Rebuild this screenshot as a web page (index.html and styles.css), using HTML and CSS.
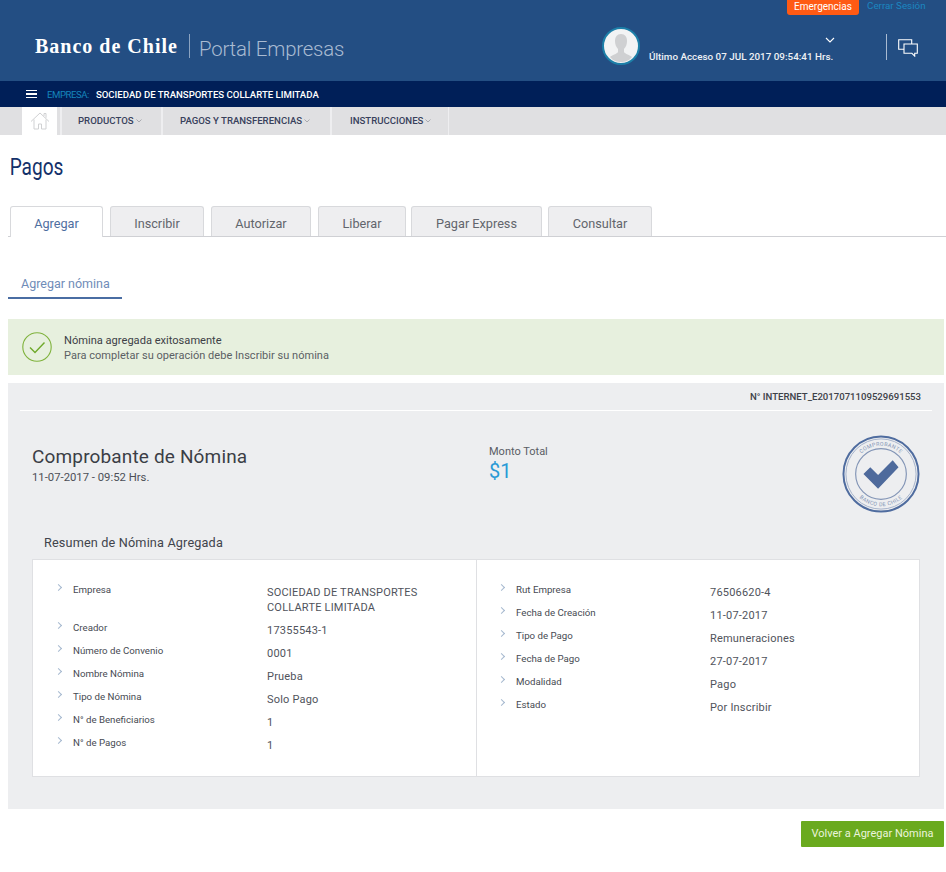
FILE: index.html
```html
<!DOCTYPE html>
<html lang="es">
<head>
<meta charset="utf-8">
<title>Pagos</title>
<link rel="stylesheet" href="styles.css">
</head>
<body>
<header class="header">
  <div class="top-links">
    <a class="emergency">Emergencias</a>
    <a class="logout">Cerrar Sesión</a>
  </div>
  <div class="header-main">
    <div class="logo">Banco de Chile</div>
    <div class="portal">Portal Empresas</div>
    <div class="user">
      <svg class="avatar" width="38" height="38" viewBox="0 0 38 38">
        <circle cx="19" cy="19" r="18" fill="#f2f3f4" stroke="#1c7fa8" stroke-width="2"/>
        <path d="M19 7c-4 0-6 3-6 7 0 3 1 6 3 8v3c-1 2-6 3-8 5 3 4 7 5 11 5s8-1 11-5c-2-2-7-3-8-5v-3c2-2 3-5 3-8 0-4-2-7-6-7z" fill="#cfd0d2"/>
      </svg>
      <div class="user-info">
        <svg class="user-chev" width="10" height="6" viewBox="0 0 10 6"><path d="M1 1l4 4 4-4" fill="none" stroke="#fff" stroke-width="1.1"/></svg>
        <div class="last-access">Último Acceso 07 JUL 2017 09:54:41 Hrs.</div>
      </div>
    </div>
    <div class="chat">
      <svg width="20" height="18" viewBox="0 0 20 18"><path d="M.7.7h13v9.6H4.5L.7 10.3z" fill="none" stroke="#fff" stroke-width="1.1"/><path d="M6 5h13.3v9.3h-2.600v2.800l-2.800-2.800H6z" fill="#234e83" stroke="#fff" stroke-width="1.1"/></svg>
    </div>
  </div>
</header>
<div class="company-bar">
  <span class="burger"><i></i><i></i><i></i></span>
  <span class="company-label">EMPRESA:</span>
  <span class="company-name">SOCIEDAD DE TRANSPORTES COLLARTE LIMITADA</span>
</div>
<nav class="nav">
  <a class="nav-home">
    <svg width="20" height="18" viewBox="0 0 20 18"><path d="M1 9.5L10 1l9 8.5M4 7.5V17h4.500v-5h3v5H16V7.500M14 4V1.500h2v4.300" fill="none" stroke="#d0d1d3" stroke-width="1"/></svg>
  </a>
  <a class="nav-item nav-products">PRODUCTOS<svg class="caret" width="6" height="4" viewBox="0 0 6 4"><path d="M.5.500L3 3 5.500.500" fill="none" stroke="#9a9ca3" stroke-width=".8"/></svg></a>
  <a class="nav-item nav-payments">PAGOS Y TRANSFERENCIAS<svg class="caret" width="6" height="4" viewBox="0 0 6 4"><path d="M.5.500L3 3 5.500.500" fill="none" stroke="#9a9ca3" stroke-width=".8"/></svg></a>
  <a class="nav-item nav-instr">INSTRUCCIONES<svg class="caret" width="6" height="4" viewBox="0 0 6 4"><path d="M.5.500L3 3 5.500.500" fill="none" stroke="#9a9ca3" stroke-width=".8"/></svg></a>
</nav>
<main class="page">
  <h1 class="page-title">Pagos</h1>
  <div class="tabs">
    <a class="tab tab-active t-add">Agregar</a>
    <a class="tab t-reg">Inscribir</a>
    <a class="tab t-auth">Autorizar</a>
    <a class="tab t-free">Liberar</a>
    <a class="tab t-exp">Pagar Express</a>
    <a class="tab t-find">Consultar</a>
  </div>
  <div class="subtab">Agregar nómina</div>
  <div class="alert">
    <svg width="30" height="30" viewBox="0 0 30 30"><circle cx="15" cy="15" r="14.200" fill="none" stroke="#7fb23c" stroke-width="1.100"/><path d="M8 15.500l5 5 9.500-10" fill="none" stroke="#6fa92b" stroke-width="1.400"/></svg>
    <div class="alert-text">
      <div class="alert-title">Nómina agregada exitosamente</div>
      <div class="alert-sub">Para completar su operación debe Inscribir su nómina</div>
    </div>
  </div>
  <section class="receipt">
    <div class="receipt-id">N° INTERNET_E2017071109529691553</div>
    <div class="receipt-head">
      <div class="receipt-title">
        <h2>Comprobante de Nómina</h2>
        <div class="receipt-date">11-07-2017 - 09:52 Hrs.</div>
      </div>
      <div class="receipt-total">
        <div class="total-label">Monto Total</div>
        <div class="total-value">$1</div>
      </div>
      <svg class="stamp" width="78" height="78" viewBox="0 0 80 80">
        <defs>
          <path id="arcTop" d="M11 40a29 29 0 0 1 58 0"/>
          <path id="arcBottom" d="M7 40a33 33 0 0 0 66 0"/>
        </defs>
        <circle cx="40" cy="40" r="38.500" fill="none" stroke="#4f6c9f" stroke-width="2"/>
        <circle cx="40" cy="40" r="36" fill="none" stroke="#a5b2ca" stroke-width="1"/>
        <circle cx="40" cy="40" r="26" fill="none" stroke="#8395b6" stroke-width="1.200"/>
        <text class="stamp-text"><textPath href="#arcTop" startOffset="50%" text-anchor="middle">COMPROBANTE</textPath></text>
        <text class="stamp-text"><textPath href="#arcBottom" startOffset="50%" text-anchor="middle">BANCO DE CHILE</textPath></text>
        <path d="M22 40l7-7 8 8 15-15 6 7-21 22z" fill="#4e6a9c"/>
      </svg>
    </div>
    <h3 class="summary-title">Resumen de Nómina Agregada</h3>
    <div class="summary">
      <div class="summary-col">
        <div class="row"><span class="chev"></span><span class="k">Empresa</span><span class="v">SOCIEDAD DE TRANSPORTES<br>COLLARTE LIMITADA</span></div>
        <div class="row"><span class="chev"></span><span class="k">Creador</span><span class="v">17355543-1</span></div>
        <div class="row"><span class="chev"></span><span class="k">Número de Convenio</span><span class="v">0001</span></div>
        <div class="row"><span class="chev"></span><span class="k">Nombre Nómina</span><span class="v">Prueba</span></div>
        <div class="row"><span class="chev"></span><span class="k">Tipo de Nómina</span><span class="v">Solo Pago</span></div>
        <div class="row"><span class="chev"></span><span class="k">N° de Beneficiarios</span><span class="v">1</span></div>
        <div class="row"><span class="chev"></span><span class="k">N° de Pagos</span><span class="v">1</span></div>
      </div>
      <div class="summary-col col-right">
        <div class="row"><span class="chev"></span><span class="k">Rut Empresa</span><span class="v">76506620-4</span></div>
        <div class="row"><span class="chev"></span><span class="k">Fecha de Creación</span><span class="v">11-07-2017</span></div>
        <div class="row"><span class="chev"></span><span class="k">Tipo de Pago</span><span class="v">Remuneraciones</span></div>
        <div class="row"><span class="chev"></span><span class="k">Fecha de Pago</span><span class="v">27-07-2017</span></div>
        <div class="row"><span class="chev"></span><span class="k">Modalidad</span><span class="v">Pago</span></div>
        <div class="row"><span class="chev"></span><span class="k">Estado</span><span class="v">Por Inscribir</span></div>
      </div>
    </div>
  </section>
  <div class="actions"><a class="btn">Volver a Agregar Nómina</a></div>
</main>
</body>
</html>
```
FILE: styles.css
```css
* { box-sizing: border-box; }
html, body { margin: 0; padding: 0; }
body {
  width: 946px;
  height: 872px;
  overflow: hidden;
  background: #fff;
  font-family: Roboto, "Liberation Sans", sans-serif;
  color: #3a3d45;
}
h1, h2, h3 { margin: 0; font-weight: 400; }

.header { height: 81px; background: #234e83; }
.top-links { display: flex; justify-content: flex-end; align-items: flex-start; height: 16px; padding-right: 20px; font-size: 10px; }
.emergency { width: 72px; height: 15px; line-height: 13px; text-align: center; color: #fff; background: #ff5a14; border-radius: 0 0 3px 3px; }
.logout { margin-left: 8px; width: 59px; font-size: 9.800px; line-height: 12px; color: #1b86c0; white-space: nowrap; }
.header-main { display: flex; align-items: flex-start; height: 65px; }
.logo { margin: 17px 0 0 35px; width: 143px; font: 700 20px/26px "Liberation Serif", serif; color: #fff; white-space: nowrap; letter-spacing: 1px; }
.portal { margin: 18px 0 0 11px; padding-left: 9px; height: 24px; border-left: 1px solid #8ba3c1; font-size: 20.400px; line-height: 30px; font-weight: 300; color: #a9bbd2; white-space: nowrap; letter-spacing: -.2px; }
.user { display: flex; margin-left: 258px; margin-top: 11px; }
.user-info { position: relative; margin-left: 9px; padding-top: 23px; width: 237px; }
.user-chev { position: absolute; left: 176px; top: 10px; }
.last-access { font-size: 9.850px; line-height: 13px; font-weight: 500; color: #eef1f5; white-space: nowrap; }
.chat { margin: 18px 0 0 0; padding: 5px 0 0 11px; height: 26px; border-left: 1px solid #a9bbd2; }
.chat svg { display: block; }

.company-bar { display: flex; align-items: center; height: 26px; padding-left: 26px; background: #001f58; font-size: 9.600px; }
.burger { display: flex; flex-direction: column; gap: 2px; width: 11px; margin-right: 10px; }
.burger i { display: block; height: 1.500px; background: #fff; }
.company-label { color: #1685bb; margin-right: 7px; letter-spacing: -.45px; }
.company-name { color: #fff; font-weight: 500; }

.nav { display: flex; height: 28px; padding-left: 22px; background: #e0e0e2; font-size: 9.600px; font-weight: 500; color: #38415c; }
.nav-home { display: flex; align-items: center; justify-content: center; width: 35px; background: #fff; margin-right: 3px; }
.nav-item { display: flex; align-items: center; padding-bottom: 2px; border-left: 2px solid #eeeef0; white-space: nowrap; }
.caret { margin-left: 2px; margin-top: 1px; }
.nav-products { width: 101px; padding-left: 16px; }
.nav-payments { width: 169px; padding-left: 17px; }
.nav-instr { width: 119px; padding-left: 18px; border-right: 1px solid #eeeef0; }

.page { padding: 0 2px 0 8px; }
.page-title { height: 71px; padding: 20px 0 0 2px; font-size: 23px; line-height: 26px; font-weight: 400; color: #14316a; transform: scaleX(.83); transform-origin: 0 0; }

.tabs { display: flex; height: 31px; margin-right: -2px; border-bottom: 1px solid #cfd0d4; padding-left: 2px; font-size: 12.700px; }
.tab { height: 30px; padding-top: 9px; line-height: 15px; text-align: center; color: #62656c; background: #eeeef0; border: 1px solid #d8d9dc; border-bottom: 0; border-radius: 3px 3px 0 0; }
.tab-active { height: 31px; background: #fff; color: #4f6ea0; }
.t-add { width: 93px; margin-right: 7px; }
.t-reg { width: 94px; margin-right: 7px; }
.t-auth { width: 100px; margin-right: 7px; }
.t-free { width: 88px; margin-right: 5px; }
.t-exp { width: 131px; margin-right: 6px; }
.t-find { width: 104px; }

.subtab { width: 114px; height: 31px; margin-top: 31px; padding: 8px 0 0 13px; font-size: 12.500px; line-height: 15px; color: #6f8cb8; border-bottom: 2px solid #4a6da3; white-space: nowrap; }

.alert { display: flex; align-items: center; height: 56px; margin-top: 20px; padding-left: 14px; background: #e7f0de; }
.alert-text { margin-left: 12px; padding-top: 1px; font-size: 11px; line-height: 15px; }
.alert-title { font-size: 11.100px; color: #3d4046; }
.alert-sub { color: #5b5f64; font-size: 11px; letter-spacing: .03px; }

.receipt { height: 426px; margin-top: 8px; padding: 0 12px; background: #edeef0; }
.receipt-id { height: 28px; padding: 7px 11px 0 0; text-align: right; font-size: 9.600px; line-height: 13px; font-weight: 500; color: #3d4148; border-bottom: 1px solid #fff; }
.receipt-head { position: relative; display: flex; height: 121px; padding-left: 12px; }
.receipt-title { width: 457px; padding-top: 33px; }
.receipt-title h2 { font-size: 19px; line-height: 26px; color: #3b3e46; letter-spacing: .15px; }
.receipt-date { font-size: 11.300px; line-height: 15px; color: #4c4f57; }
.receipt-total { padding-top: 33px; }
.total-label { font-size: 11px; line-height: 15px; color: #5a5d65; }
.total-value { font-size: 20px; line-height: 24px; color: #2a9ad6; }
.stamp { position: absolute; left: 822px; top: 24px; }
.stamp-text { font-size: 5.500px; font-family: Roboto, sans-serif; fill: #8395b6; letter-spacing: .4px; }

.summary-title { height: 27px; padding-left: 24px; padding-top: 3px; font-size: 12.700px; line-height: 16px; color: #41444c; letter-spacing: .15px; }
.summary { display: flex; width: 888px; height: 218px; margin-left: 12px; background: #fff; border: 1px solid #dfe0e3; }
.summary-col { width: 444px; padding: 23px 0 0 24px; border-right: 1px solid #dfe0e3; }
.col-right { flex: 1; padding-left: 23px; border-right: 0; }
.row { display: grid; grid-template-columns: 16px 194px 1fr; margin-bottom: 6px; }
.k { font-size: 9.700px; line-height: 13px; color: #464a52; }
.v { padding-top: 2px; font-size: 11px; line-height: 15px; color: #50535b; letter-spacing: .2px; }
.chev { display: block; width: 5px; height: 5px; margin-top: 2px; margin-left: -1px; border-top: 1px solid #a5b8cf; border-right: 1px solid #a5b8cf; transform: rotate(45deg); }

.actions { display: flex; justify-content: flex-end; margin-top: 12px; }
.btn { display: block; width: 143px; height: 26px; line-height: 26px; text-align: center; font-size: 11px; color: #eaf4dc; background: #6aaa1e; border-radius: 1px; }
```
